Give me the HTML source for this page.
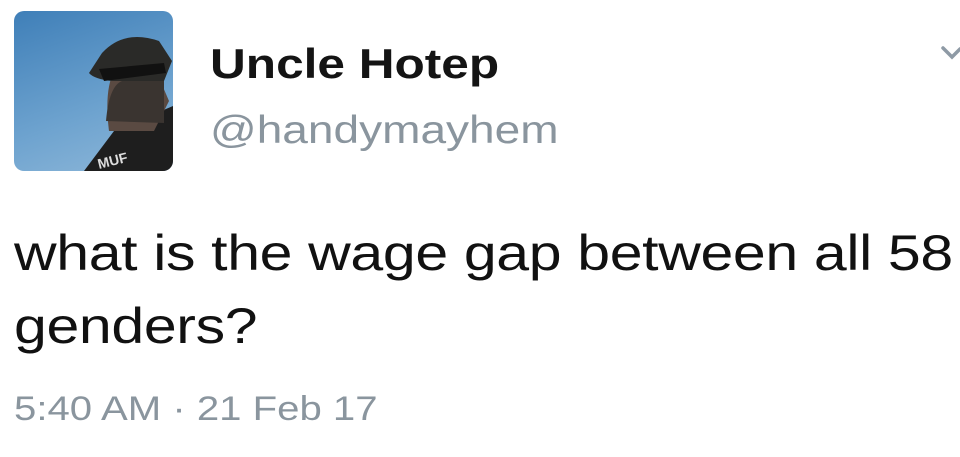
<!DOCTYPE html>
<html><head><style>
body{margin:0;width:960px;height:457px;background:#fff;position:relative;overflow:hidden;font-family:"Liberation Sans",sans-serif}
.av{position:absolute;left:14px;top:11px;width:159px;height:160px;border-radius:10px;overflow:hidden;background:linear-gradient(160deg,#3f7fb8,#6ea3cf 60%,#8fb8d9)}
.t{position:absolute;white-space:nowrap;line-height:1;transform:scaleX(1.18);transform-origin:0 0}
</style></head><body>
<div class="av"><svg width="159" height="160" viewBox="0 0 159 160">
<path d="M70 160 L100 120 L159 95 L159 160Z" fill="#1e1e1e"/>
<path d="M95 120 Q90 80 100 60 L140 55 L155 90 L140 120 Z" fill="#5a4a42"/>
<path d="M92 110 Q95 75 108 70 L150 68 L150 112 Z" fill="#3a3430"/>
<path d="M88 42 Q110 18 145 30 L158 50 L150 70 L98 70 Q80 68 75 62 Z" fill="#2a2a28"/>
<path d="M85 58 L150 52 L152 62 L90 70Z" fill="#111"/>
<text x="85" y="158" font-size="14" fill="#ddd" font-weight="bold" transform="rotate(-14 85 158)">MUF</text>
</svg></div>
<div class="t" style="left:210px;top:43px;font-size:42px;font-weight:bold;color:#141414">Uncle Hotep</div>
<div class="t" style="left:210px;top:111px;font-size:39px;color:#8a959e">@handymayhem</div>
<svg style="position:absolute;left:940px;top:45px" width="20" height="20"><path d="M3 3 L12 12 L20 4" stroke="#8e9aa5" stroke-width="3.5" fill="none" stroke-linecap="round"/></svg>
<div class="t" style="left:14px;top:228px;font-size:50px;color:#111;letter-spacing:-0.3px">what is the wage gap between all 58</div>
<div class="t" style="left:14px;top:301px;font-size:50px;color:#111;letter-spacing:-0.3px">genders?</div>
<div class="t" style="left:14px;top:392px;font-size:34px;color:#8a959e">5:40 AM · 21 Feb 17</div>
</body></html>
